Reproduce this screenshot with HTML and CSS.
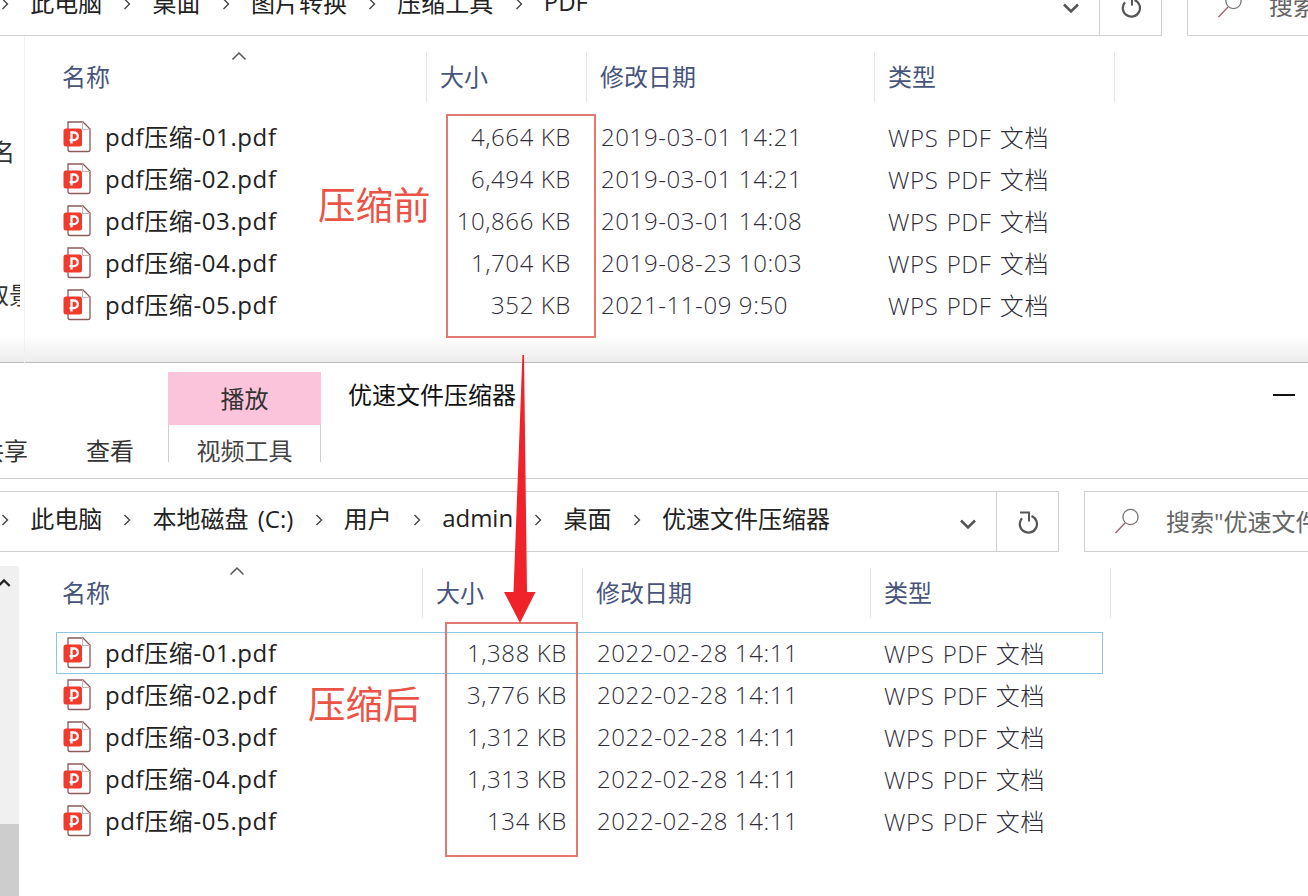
FILE: index.html
```html
<!DOCTYPE html>
<html lang="zh-CN">
<head>
  <meta charset="UTF-8" />
  <title>PDF 压缩前后对比</title>
  <link rel="stylesheet" href="styles.css">
</head>
<body>
  <svg class="defs" width="0" height="0">
    <symbol id="pdf-icon" viewBox="0 0 28 32">
      <path d="M5 1H20L27 8V28.5Q27 30.5 25 30.5H7Q5 30.5 5 28.5Z" fill="#fff" stroke="#8f5a5a" stroke-width="1.3"/>
      <path d="M19.5 1V8.5H27" fill="none" stroke="#c9b0b0" stroke-width="1"/>
      <rect x="0.5" y="7.5" width="18.5" height="18" rx="2.5" fill="#f03b2c"/>
      <path d="M8.5 22.5V11.5H11a3.8 3.8 0 0 1 0 7.6H6.5" fill="none" stroke="#fff" stroke-width="2.3"/>
    </symbol>
    <symbol id="crumb-sep" viewBox="0 0 8 14">
      <path d="M1.5 2L6.5 7L1.5 12" fill="none" stroke="#444" stroke-width="1.4"/>
    </symbol>
    <symbol id="caret-down" viewBox="0 0 18 12">
      <path d="M2 2.5L9 9.5L16 2.5" fill="none" stroke="#555" stroke-width="2.6"/>
    </symbol>
    <symbol id="refresh" viewBox="0 0 20 24">
      <path d="M13.5 5A8.6 8.6 0 1 1 4 7.2" fill="none" stroke="#555" stroke-width="2.2"/>
      <path d="M2 1.5H11V10.5" fill="none" stroke="#555" stroke-width="2"/>
    </symbol>
    <symbol id="search" viewBox="0 0 26 28">
      <circle cx="16.5" cy="9" r="7.6" fill="none" stroke="#777" stroke-width="1.3"/>
      <path d="M11 15L1.5 25" fill="none" stroke="#a2606a" stroke-width="1.3"/>
    </symbol>
    <symbol id="sort-up" viewBox="0 0 16 10">
      <path d="M1.5 8.5L8 2L14.5 8.5" fill="none" stroke="#555" stroke-width="1.5"/>
    </symbol>
    <symbol id="scroll-up" viewBox="0 0 16 10">
      <path d="M1.5 8.5L8 2L14.5 8.5" fill="none" stroke="#222" stroke-width="2.6"/>
    </symbol>
  </svg>

  <!-- Top window: before -->
  <section class="window window-before">
    <div class="address-row">
      <div class="address-box">
        <div class="crumbs">
          <svg class="sep"><use href="#crumb-sep"/></svg><span>此电脑</span>
          <svg class="sep"><use href="#crumb-sep"/></svg><span>桌面</span>
          <svg class="sep"><use href="#crumb-sep"/></svg><span>图片转换</span>
          <svg class="sep"><use href="#crumb-sep"/></svg><span>压缩工具</span>
          <svg class="sep"><use href="#crumb-sep"/></svg><span>PDF</span>
        </div>
        <svg class="dropdown"><use href="#caret-down"/></svg>
        <div class="refresh-btn"><svg class="refresh-icon"><use href="#refresh"/></svg></div>
      </div>
      <div class="search-box">
        <svg class="search-icon"><use href="#search"/></svg>
        <span>搜索"PDF"</span>
      </div>
    </div>

    <div class="explorer">
      <aside class="nav-pane">
        <span class="nav-one">签名</span>
        <span class="nav-two">取景</span>
      </aside>
      <div class="files">
        <div class="file-head">
          <div class="head-cell name-head">名称<svg class="sort-icon"><use href="#sort-up"/></svg></div>
          <div class="head-cell">大小</div>
          <div class="head-cell">修改日期</div>
          <div class="head-cell">类型</div>
        </div>
        <div class="file-row">
          <div class="file-name"><svg class="pdf-icon"><use href="#pdf-icon"/></svg>pdf压缩-01.pdf</div>
          <div class="file-size">4,664 KB</div>
          <div class="file-date">2019-03-01 14:21</div>
          <div class="file-type">WPS PDF 文档</div>
        </div>
        <div class="file-row">
          <div class="file-name"><svg class="pdf-icon"><use href="#pdf-icon"/></svg>pdf压缩-02.pdf</div>
          <div class="file-size">6,494 KB</div>
          <div class="file-date">2019-03-01 14:21</div>
          <div class="file-type">WPS PDF 文档</div>
        </div>
        <div class="file-row">
          <div class="file-name"><svg class="pdf-icon"><use href="#pdf-icon"/></svg>pdf压缩-03.pdf</div>
          <div class="file-size">10,866 KB</div>
          <div class="file-date">2019-03-01 14:08</div>
          <div class="file-type">WPS PDF 文档</div>
        </div>
        <div class="file-row">
          <div class="file-name"><svg class="pdf-icon"><use href="#pdf-icon"/></svg>pdf压缩-04.pdf</div>
          <div class="file-size">1,704 KB</div>
          <div class="file-date">2019-08-23 10:03</div>
          <div class="file-type">WPS PDF 文档</div>
        </div>
        <div class="file-row">
          <div class="file-name"><svg class="pdf-icon"><use href="#pdf-icon"/></svg>pdf压缩-05.pdf</div>
          <div class="file-size">352 KB</div>
          <div class="file-date">2021-11-09 9:50</div>
          <div class="file-type">WPS PDF 文档</div>
        </div>
      </div>
    </div>
  </section>

  <!-- Bottom window: after -->
  <section class="window window-after">
    <div class="ribbon">
      <div class="ribbon-tabs">
        <span class="ribbon-tab tab-share">共享</span>
        <span class="ribbon-tab tab-view">查看</span>
        <div class="context-tab">
          <div class="context-top">播放</div>
          <div class="context-bottom">视频工具</div>
        </div>
        <div class="window-title">优速文件压缩器</div>
      </div>
      <div class="minimize"></div>
    </div>

    <div class="address-row">
      <div class="address-box">
        <div class="crumbs">
          <svg class="sep"><use href="#crumb-sep"/></svg><span>此电脑</span>
          <svg class="sep"><use href="#crumb-sep"/></svg><span>本地磁盘 (C:)</span>
          <svg class="sep"><use href="#crumb-sep"/></svg><span>用户</span>
          <svg class="sep"><use href="#crumb-sep"/></svg><span>admin</span>
          <svg class="sep"><use href="#crumb-sep"/></svg><span>桌面</span>
          <svg class="sep"><use href="#crumb-sep"/></svg><span>优速文件压缩器</span>
        </div>
        <svg class="dropdown"><use href="#caret-down"/></svg>
        <div class="refresh-btn"><svg class="refresh-icon"><use href="#refresh"/></svg></div>
      </div>
      <div class="search-box">
        <svg class="search-icon"><use href="#search"/></svg>
        <span>搜索"优速文件压缩器"</span>
      </div>
    </div>

    <div class="explorer">
      <aside class="scrollbar">
        <div class="scroll-top"><svg class="scroll-arrow"><use href="#scroll-up"/></svg></div>
        <div class="scroll-thumb"></div>
      </aside>
      <div class="files">
        <div class="file-head">
          <div class="head-cell name-head">名称<svg class="sort-icon"><use href="#sort-up"/></svg></div>
          <div class="head-cell">大小</div>
          <div class="head-cell">修改日期</div>
          <div class="head-cell">类型</div>
        </div>
        <div class="file-row selected">
          <div class="file-name"><svg class="pdf-icon"><use href="#pdf-icon"/></svg>pdf压缩-01.pdf</div>
          <div class="file-size">1,388 KB</div>
          <div class="file-date">2022-02-28 14:11</div>
          <div class="file-type">WPS PDF 文档</div>
        </div>
        <div class="file-row">
          <div class="file-name"><svg class="pdf-icon"><use href="#pdf-icon"/></svg>pdf压缩-02.pdf</div>
          <div class="file-size">3,776 KB</div>
          <div class="file-date">2022-02-28 14:11</div>
          <div class="file-type">WPS PDF 文档</div>
        </div>
        <div class="file-row">
          <div class="file-name"><svg class="pdf-icon"><use href="#pdf-icon"/></svg>pdf压缩-03.pdf</div>
          <div class="file-size">1,312 KB</div>
          <div class="file-date">2022-02-28 14:11</div>
          <div class="file-type">WPS PDF 文档</div>
        </div>
        <div class="file-row">
          <div class="file-name"><svg class="pdf-icon"><use href="#pdf-icon"/></svg>pdf压缩-04.pdf</div>
          <div class="file-size">1,313 KB</div>
          <div class="file-date">2022-02-28 14:11</div>
          <div class="file-type">WPS PDF 文档</div>
        </div>
        <div class="file-row">
          <div class="file-name"><svg class="pdf-icon"><use href="#pdf-icon"/></svg>pdf压缩-05.pdf</div>
          <div class="file-size">134 KB</div>
          <div class="file-date">2022-02-28 14:11</div>
          <div class="file-type">WPS PDF 文档</div>
        </div>
      </div>
    </div>
  </section>

  <!-- Red annotations drawn over the screenshots -->
  <div class="mark-box mark-before"></div>
  <div class="mark-box mark-after"></div>
  <div class="mark-label label-before">压缩前</div>
  <div class="mark-label label-after">压缩后</div>
  <svg class="mark-arrow" viewBox="0 0 40 272">
    <path d="M22.4 3L24 3L27 240L35.5 240L20 271L4 240L13.5 240Z" fill="#f0232b"/>
  </svg>
</body>
</html>
```

FILE: styles.css
```css
/* Reset */
* {
  margin: 0;
  padding: 0;
  box-sizing: border-box;
}

html, body {
  height: 896px;
  overflow: hidden;
}

body {
  position: relative;
  width: 1308px;
  background: #fff;
  font-family: "Open Sans", "Noto Sans CJK SC", sans-serif;
  font-size: 24px;
  color: #2a2a2a;
}

.defs {
  position: absolute;
}

/* Windows */
.window-before {
  height: 388px;
  margin-top: -25px;
  background: linear-gradient(#fff 0, #fff 360px, #ececec 387px);
  border-bottom: 1px solid #bdbdbd;
}

.window-after {
  height: 533px;
  background: #fff;
}

/* Ribbon */
.ribbon {
  display: flex;
  justify-content: space-between;
  height: 116px;
  border-bottom: 1px solid #cfcfcf;
  padding-top: 9px;
}

.ribbon-tabs {
  display: flex;
  align-items: flex-start;
}

.ribbon-tab {
  margin-top: 59px;
  line-height: 40px;
  color: #333;
}

.tab-share {
  width: 28px;
  direction: rtl;
  overflow: hidden;
  white-space: nowrap;
  margin-right: 58px;
}

.tab-view {
  margin-right: 34px;
}

.context-tab {
  width: 153px;
  text-align: center;
}

.context-top {
  height: 53px;
  line-height: 53px;
  background: #fcc4da;
  color: #333;
}

.context-bottom {
  height: 37px;
  line-height: 52px;
  border-left: 1px solid #cfcfcf;
  border-right: 1px solid #cfcfcf;
  color: #444;
}

.window-title {
  margin-left: 27px;
  line-height: 46px;
  color: #111;
}

.minimize {
  width: 22px;
  height: 2px;
  margin: 22px 13px 0 0;
  background: #111;
}

/* Address bar */
.address-row {
  display: flex;
  height: 61px;
  margin-top: 12px;
}

.window-before .address-row {
  margin-top: 0;
}

.address-box {
  display: flex;
  align-items: center;
  width: 1059px;
  border: 1px solid #cfcfcf;
  border-left: none;
  color: #222;
}

.window-before .address-box {
  width: 1162px;
}

.crumbs {
  display: flex;
  align-items: center;
  gap: 21.2px;
  flex: 1;
  padding: 0 0 9px 1px;
  word-spacing: 3px;
  white-space: nowrap;
}

.sep {
  width: 8px;
  height: 14px;
  margin-top: 5px;
  flex: none;
}

.dropdown {
  width: 18px;
  height: 12px;
  margin: 4px 19px 0 0;
}

.refresh-btn {
  display: flex;
  align-items: center;
  justify-content: center;
  width: 62px;
  height: 100%;
  border-left: 1px solid #cfcfcf;
}

.refresh-icon {
  width: 20px;
  height: 24px;
  margin-top: 2px;
}

.search-box {
  display: flex;
  align-items: center;
  gap: 26px;
  flex: 1;
  margin-left: 25px;
  padding-left: 29px;
  border: 1px solid #cfcfcf;
  border-right: none;
  color: #666;
  white-space: nowrap;
  overflow: hidden;
}

.search-box span {
  padding-bottom: 3px;
}

.search-icon {
  width: 26px;
  height: 28px;
  flex: none;
}

/* File list */
.explorer {
  display: flex;
  padding-top: 16px;
}

.nav-pane {
  position: relative;
  width: 25px;
  height: 327px;
  margin-top: -16px;
  border-right: 1px solid #f1f1f1;
  overflow: hidden;
  color: #333;
}

.nav-pane span {
  position: absolute;
  white-space: nowrap;
  overflow: hidden;
}

.nav-one {
  top: 97px;
  right: 9px;
}

.nav-two {
  top: 240px;
  left: -15px;
  width: 35px;
}

.scrollbar {
  display: flex;
  flex-direction: column;
  justify-content: space-between;
  width: 19px;
  height: 330px;
  margin-top: -2px;
  background: #f0f0f0;
}

.scroll-top {
  height: 30px;
  overflow: hidden;
}

.scroll-arrow {
  display: block;
  width: 14px;
  height: 10px;
  margin: 12px 0 0 -3px;
}

.scroll-thumb {
  height: 72px;
  background: #cdcdcd;
}

.files {
  flex: 1;
}

.file-head,
.file-row {
  display: grid;
  grid-template-columns: 401px 160px 288px 241px;
}

.window-after .file-head {
  grid-template-columns: 403px 160px 288px 241px;
}

.window-after .file-row {
  grid-template-columns: 366px 160px 288px 233px;
  width: 1047px;
  margin-left: 37px;
}

.file-head {
  height: 50px;
  margin-bottom: 14px;
}

.head-cell {
  position: relative;
  display: flex;
  align-items: center;
  padding: 0 0 4px 13px;
  border-left: 1px solid #e3e6ec;
  color: #47557c;
}

.head-cell:last-child {
  border-right: 1px solid #e3e6ec;
}

.name-head {
  padding-left: 37px;
  border-left: none;
}

.window-after .name-head {
  padding-left: 43px;
}

.sort-icon {
  position: absolute;
  left: 206px;
  top: -1px;
  width: 16px;
  height: 10px;
}

.window-after .sort-icon {
  left: 210px;
  top: -2px;
}

.file-row {
  height: 42px;
  padding-bottom: 4px;
  align-items: center;
  letter-spacing: 0.6px;
  font-weight: 300;
  color: #2f2d3a;
}

.selected {
  outline: 1px solid #8cc6e6;
  outline-offset: -1px;
}

.file-name {
  display: flex;
  align-items: center;
  gap: 14px;
  padding-left: 38px;
  font-weight: 400;
  color: #222;
}

.window-after .file-name {
  padding-left: 7px;
}

.pdf-icon {
  width: 28px;
  height: 32px;
  margin-top: 4px;
  flex: none;
}

.file-size,
.file-date,
.file-type {
  padding-top: 2px;
}

.file-size {
  text-align: right;
  padding-right: 15px;
}

.file-date {
  padding-left: 15px;
}

.file-type {
  padding-left: 14px;
  word-spacing: 1.5px;
}

/* Annotations */
.mark-box {
  position: absolute;
  border: 2px solid #e2796f;
}

.mark-before {
  left: 446px;
  top: 114px;
  width: 150px;
  height: 224px;
}

.mark-after {
  left: 445px;
  top: 622px;
  width: 133px;
  height: 235px;
}

.mark-label {
  position: absolute;
  font-family: "Noto Sans CJK SC", sans-serif;
  font-size: 37.5px;
  line-height: 44px;
  color: #ec5347;
  text-shadow: 0 0 6px #fff;
}

.label-before {
  left: 318px;
  top: 181px;
}

.label-after {
  left: 308px;
  top: 680px;
}

.mark-arrow {
  position: absolute;
  left: 500px;
  top: 352px;
  width: 40px;
  height: 272px;
}
```
